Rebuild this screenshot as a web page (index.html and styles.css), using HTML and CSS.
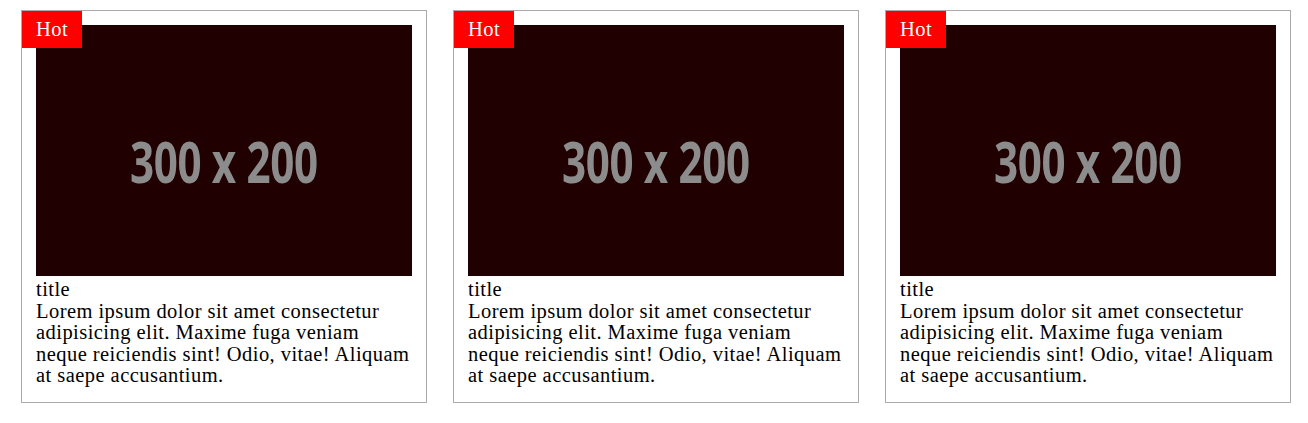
FILE: index.html
```html
<!DOCTYPE html>
<html>
<head>
<meta charset="utf-8">
<link rel="stylesheet" href="styles.css">
</head>
<body>
<div class="cards">
  <div class="card">
    <span class="badge">Hot</span>
    <div class="thumb"><span class="thumb-label">300 x 200</span></div>
    <div class="title">title</div>
    <div class="desc">Lorem ipsum dolor sit amet consectetur adipisicing elit. Maxime fuga veniam neque reiciendis sint! Odio, vitae! Aliquam at saepe accusantium.</div>
  </div>
  <div class="card">
    <span class="badge">Hot</span>
    <div class="thumb"><span class="thumb-label">300 x 200</span></div>
    <div class="title">title</div>
    <div class="desc">Lorem ipsum dolor sit amet consectetur adipisicing elit. Maxime fuga veniam neque reiciendis sint! Odio, vitae! Aliquam at saepe accusantium.</div>
  </div>
  <div class="card">
    <span class="badge">Hot</span>
    <div class="thumb"><span class="thumb-label">300 x 200</span></div>
    <div class="title">title</div>
    <div class="desc">Lorem ipsum dolor sit amet consectetur adipisicing elit. Maxime fuga veniam neque reiciendis sint! Odio, vitae! Aliquam at saepe accusantium.</div>
  </div>
</div>
</body>
</html>
```
FILE: styles.css
```css
html, body {
  margin: 0;
  padding: 0;
  background: #fff;
}
body {
  font-family: "Liberation Serif", "Times New Roman", serif;
  font-size: 20.5px;
  letter-spacing: 0.45px;
  color: #000;
}
.cards {
  display: flex;
  align-items: flex-start;
  gap: 26px;
  padding: 10px 0 0 21px;
}
.card {
  position: relative;
  width: 376px;
  border: 1px solid #aaa;
  padding: 14px 14px 15.5px 14px;
}
.badge {
  position: absolute;
  left: 0;
  top: 0;
  width: 60px;
  height: 37px;
  background: #ff0000;
  color: #fff;
  line-height: 37px;
  text-align: center;
  z-index: 1;
}
.thumb {
  height: 251px;
  background: #200000;
  display: flex;
  align-items: center;
  justify-content: center;
  padding-top: 20px;
  box-sizing: border-box;
  margin-bottom: 3px;
}
.thumb-label {
  font-family: "Open Sans", "Noto Sans", sans-serif;
  font-weight: 700;
  font-size: 57px;
  color: #8c8c8c;
  letter-spacing: -0.5px;
  white-space: nowrap;
  transform: scaleX(0.74);
  filter: blur(0.6px);
}
.title, .desc {
  line-height: 21.5px;
}
```
